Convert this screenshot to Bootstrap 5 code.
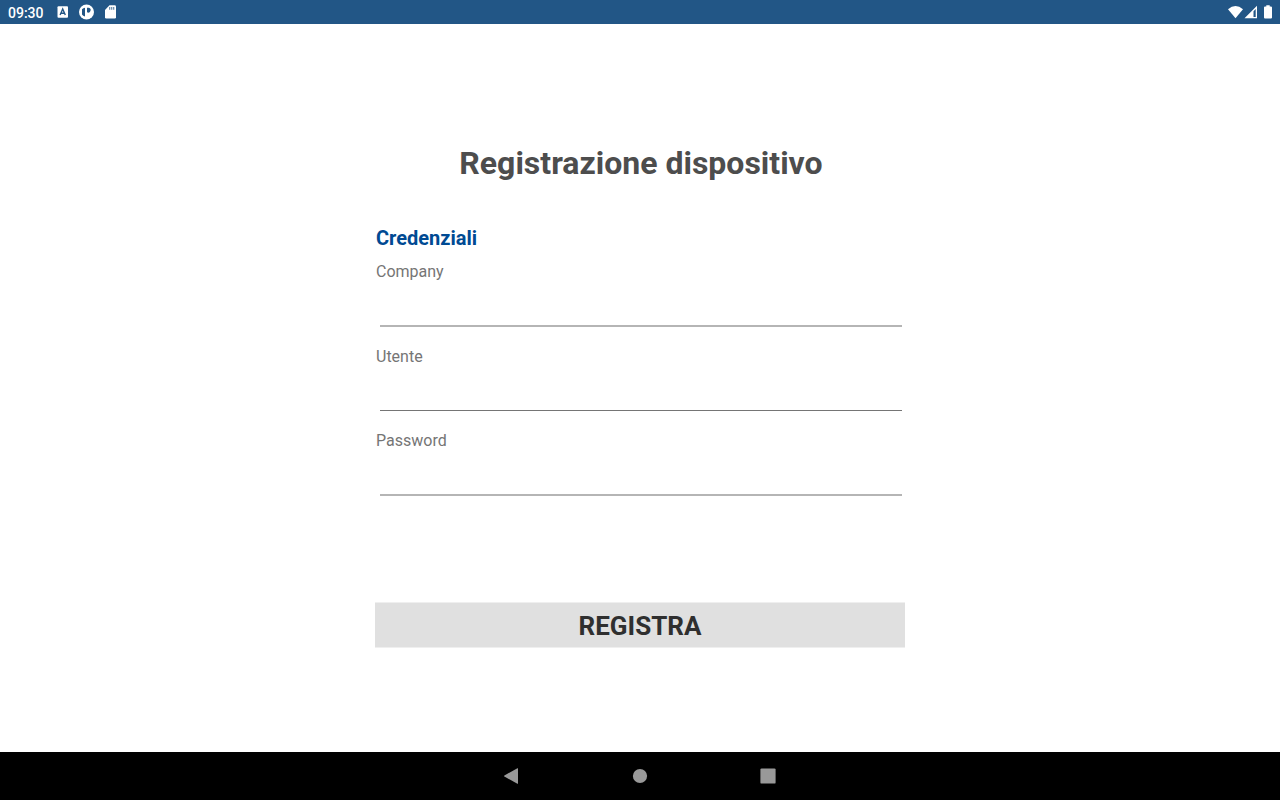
<!DOCTYPE html>
<html lang="it">
<head>
<meta charset="utf-8">
<meta name="viewport" content="width=device-width, initial-scale=1">
<title>Registrazione dispositivo</title>
<link href="https://cdn.jsdelivr.net/npm/bootstrap@5.3.0/dist/css/bootstrap.min.css" rel="stylesheet">
<style>
body{font-family:Roboto,"Noto Sans",sans-serif;background:#fff}
svg{display:block}
.status-bar{height:24px;background:#225686;color:#fff}
.clock{font-size:14px;line-height:20px;font-weight:500;padding-top:1px;margin-right:10px}
.form-area{width:100%;max-width:530px;padding-top:117px}
.page-title{font-size:32px;line-height:44px;font-weight:700;color:#4d4d4d;padding-left:2px;margin-bottom:39px}
.section-title{font-size:20px;line-height:28px;font-weight:700;color:#004a93;padding-left:1px;margin-bottom:10px}
.field-list{min-height:234px;margin-bottom:106px}
.field-label{display:block;font-size:16px;line-height:20px;color:#757575;padding-left:1px}
.line-box{padding:0 3px 0 5px}
.line-input{height:45px;border:0;border-bottom:2px solid #b5b5b5;border-radius:0;background:transparent;padding:8px 0}
.line-input.thin{height:44px;margin-bottom:1px;border-bottom:1px solid #757575}
.line-input:focus{box-shadow:none;background:transparent;border-color:#004a93}
.register-btn{font-size:26px;line-height:42px;font-weight:700;color:#2f2f2f;background:#e0e0e0;border:0 solid #efefef;border-width:1px 0;border-radius:0;padding:2px 0 0}
.nav-bar{height:48px;background:#000}
.nav-key{width:128px;height:48px;fill:#999;background:none;border:0}
</style>
</head>
<body class="d-flex flex-column min-vh-100">
<header class="status-bar d-flex align-items-center justify-content-between px-2">
<div class="d-flex align-items-center">
<time class="clock">09:30</time>
<div class="d-flex gap-2">
<svg width="16" height="16" viewBox="0 0 16 16" aria-hidden="true"><rect x="3.5" y="2.3" width="10.5" height="11.500" rx="1" fill="#fff"/><path d="M6.100 11 8.700 5 11.300 11M7 9.300h3.400" fill="none" stroke="#225686" stroke-width="1.400"/></svg>
<svg width="16" height="16" viewBox="0 0 16 16" aria-hidden="true"><circle cx="8.5" cy="8" r="7.5" fill="#fff"/><path d="M4 5.200q1.200-1.200 3-1.400v8.800q-2-.4-3-2zM9 3.800h1.800a2.400 2.400 0 1 1-1.800 4.400z" fill="#225686"/></svg>
<svg width="16" height="16" viewBox="0 0 16 16" aria-hidden="true"><path d="M7.500 1.300h5.100q1.400 0 1.400 1.400v10.600q0 1.300-1.300 1.300H4.300Q3 14.600 3 13.300V6z" fill="#fff"/><path d="M7.100 3h1.200v2.700H7.100zM9.100 3h1.200v2.700H9.100zM11.100 3h1.200v2.700h-1.200z" fill="#225686" opacity=".7"/></svg>
</div>
</div>
<svg width="46" height="16" viewBox="0 0 46 16" aria-hidden="true"><path d="M2 5.200Q9.500-1.200 17 5.200L9.500 14.300z" fill="#fff"/><path fill-rule="evenodd" d="M31 1.700v12.600H18.500zM29.700 5v8h-2.200V7.300z" fill="#fff"/><path d="M40.300 2.500V1.300h3.400v1.200h1.200q1.100 0 1.100 1v10q0 1-1 1h-6q-1 0-1-1v-10q0-1 1-1z" fill="#fff"/></svg>
</header>
<main class="flex-grow-1 d-flex justify-content-center px-3">
<form class="form-area">
<h1 class="page-title text-center">Registrazione dispositivo</h1>
<h2 class="section-title">Credenziali</h2>
<div class="field-list d-flex flex-column justify-content-between">
<div>
<label class="field-label" for="company">Company</label>
<div class="line-box"><input class="form-control line-input" type="text" id="company"></div>
</div>
<div>
<label class="field-label" for="utente">Utente</label>
<div class="line-box"><input class="form-control line-input thin" type="text" id="utente"></div>
</div>
<div>
<label class="field-label" for="password">Password</label>
<div class="line-box"><input class="form-control line-input" type="password" id="password"></div>
</div>
</div>
<button type="button" class="register-btn d-block w-100">REGISTRA</button>
</form>
</main>
<nav class="nav-bar d-flex justify-content-center">
<button type="button" class="nav-key d-flex align-items-center justify-content-center p-0" aria-label="Indietro"><svg width="16" height="16" viewBox="0 0 16 16"><path d="M14 .5v15q0 .5-.6.300L.4 8.500Q-.2 8 .4 7.500L13.400.200Q14 0 14 .5z"/></svg></button>
<button type="button" class="nav-key d-flex align-items-center justify-content-center p-0" aria-label="Home"><svg width="16" height="16" viewBox="0 0 16 16"><circle cx="8" cy="8" r="7.100"/></svg></button>
<button type="button" class="nav-key d-flex align-items-center justify-content-center p-0" aria-label="Recenti"><svg width="16" height="16" viewBox="0 0 16 16"><rect x=".4" y=".4" width="15.200" height="15.200" rx="1.200"/></svg></button>
</nav>
<script src="https://cdn.jsdelivr.net/npm/bootstrap@5.3.0/dist/js/bootstrap.bundle.min.js"></script>
</body>
</html>
